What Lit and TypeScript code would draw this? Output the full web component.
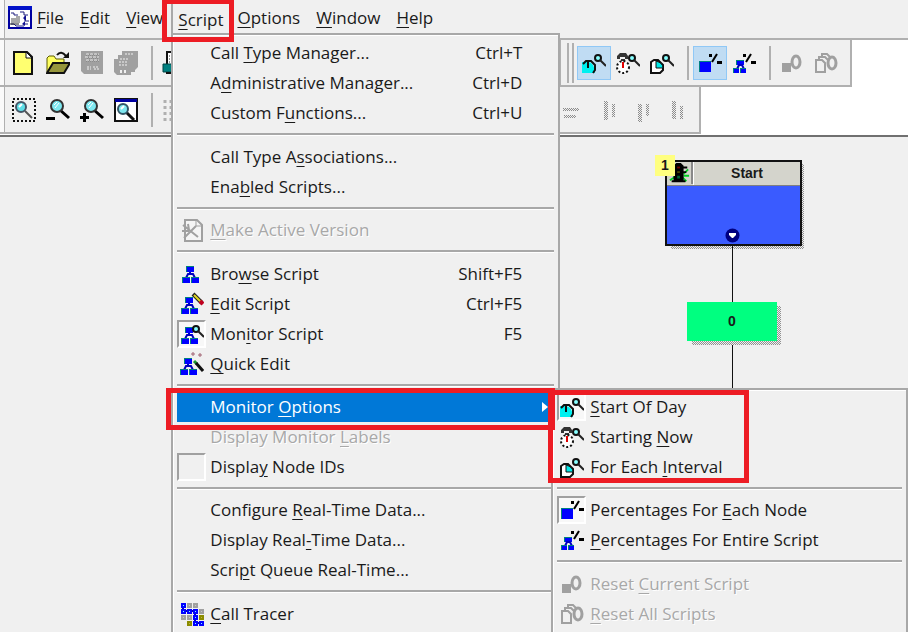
import { LitElement, html, svg, css, nothing, TemplateResult } from "lit";
import { customElement } from "lit/decorators.js";
import { classMap } from "lit/directives/class-map.js";

type Item = {
  label: string;
  keys?: string;
  icon?: string;
  checked?: boolean;
  disabled?: boolean;
  submenu?: boolean;
};
type Entry = Item | "line" | "wide-line";

const SCRIPT_MENU: Entry[] = [
  { label: "Call &Type Manager...", keys: "Ctrl+T" },
  { label: "A&dministrative Manager...", keys: "Ctrl+D" },
  { label: "Custom F&unctions...", keys: "Ctrl+U" },
  "wide-line",
  { label: "Call Type A&ssociations..." },
  { label: "Ena&bled Scripts..." },
  "line",
  { label: "&Make Active Version", icon: "active", disabled: true },
  "wide-line",
  { label: "Bro&wse Script", keys: "Shift+F5", icon: "browse" },
  { label: "&Edit Script", keys: "Ctrl+F5", icon: "edit" },
  { label: "Mon&itor Script", keys: "F5", icon: "monitor", checked: true },
  { label: "&Quick Edit", icon: "quick" },
  "line",
  { label: "Monitor &Options", submenu: true },
  { label: "Display Monitor &Labels", disabled: true },
  { label: "Displa&y Node IDs", checked: true },
  "line",
  { label: "Configure &Real-Time Data..." },
  { label: "Display Real&-Time Data..." },
  { label: "Scri&pt Queue Real-Time..." },
  "wide-line",
  { label: "&Call Tracer", icon: "tracer" },
];

const MONITOR_MENU: Entry[] = [
  { label: "&Start Of Day", icon: "day", checked: true },
  { label: "Starting &Now", icon: "now" },
  { label: "For Each &Interval", icon: "interval" },
  "line",
  { label: "Percentages For &Each Node", icon: "node", checked: true },
  { label: "&Percentages For Entire Script", icon: "entire" },
  "wide-line",
  { label: "Reset &Current Script", icon: "resetOne", disabled: true },
  { label: "&Reset All Scripts", icon: "resetAll", disabled: true },
];

const box = (x: number, y: number, w: number, h: number) => svg`
  <rect x=${x} y=${y} width=${w} height=${h} fill="#008080" />
  <rect x=${x + 1} y=${y + 1} width=${w - 1} height=${h - 1} fill="#0000ff" />`;

const tree = (x: number, y: number) => svg`
  ${box(x + 4, y, 8, 6)}
  <path d="M${x + 8} ${y + 6}v2M${x + 4} ${y + 12}l2-4h5l2 4" stroke="#0000c0" stroke-width="2" fill="none" />
  ${box(x, y + 11, 8, 6)}${box(x + 9, y + 11, 8, 6)}`;

const lens = svg`
  <circle cx="16" cy="7" r="3" fill="#8ff" stroke="#111" stroke-width="2" />
  <path d="M18 9l6 6" stroke="#222" stroke-width="2" />`;

const zoomLens = svg`
  <path d="M14 12l9 8" stroke="#000" stroke-width="3" />
  <circle cx="11" cy="8" r="6" fill="#7fe8f0" stroke="#333" stroke-width="2" />
  <path d="M8 7l3-3M9 10l4-5" stroke="#fff" stroke-width="1" />`;

const percent = svg`
  <path d="M11 3h3v3h-3zM19 10h5v3h-5z" fill="#000" />
  <path d="M14 11l5-8" stroke="#000" stroke-width="2" />`;

/** Stippled bar used by the greyed alignment tools. */
const stipple = (x: number, y: number, w: number, h: number) => {
  const cells: string[] = [];
  for (let r = 0; r < h; r++) {
    for (let c = 0; c < w; c++) {
      if ((r + c) % 2 === 0) cells.push(`M${x + c} ${y + r}h1v1h-1z`);
    }
  }
  return svg`<path d=${cells.join("")} fill="#8c8c8c" />`;
};

const ICONS: Record<string, TemplateResult> = {
  app: svg`
    <rect x="1" y="1" width="22" height="21" fill="#fff" stroke="#0000a0" stroke-width="2" />
    <path d="M0 0h24v4H0z" fill="#0010c8" />
    <path d="M3 7h3v2h4M12 6h4v3h4M17 10v5h4M20 18h-4M3 18h3l2 2h8" stroke="#202080" stroke-width="1" fill="none" />
    <path d="M3 12h9v5H3zM8 10h4v3H8z" fill="#a8a8a8" />
    <path d="M2 18h9" stroke="#222" />
    <path d="M15 12l3-3v6zM14 18l3-3v5z" fill="#101090" />`,
  fresh: svg`
    <path d="M2 1h13l5 5v17H2z" fill="#ffff70" stroke="#111" stroke-width="2" />
    <path d="M14 1v6h6z" fill="#fff" stroke="#111" />`,
  open: svg`
    <path d="M1 21V7l2-2h5l2 3h8v5H8z" fill="#ffff60" stroke="#5c5c00" stroke-width="1" />
    <path d="M1 22l6-10h17l-6 10z" fill="#96963c" stroke="#111" stroke-width="2" />
    <path d="M11 4q4-5 9 1" fill="none" stroke="#111" stroke-width="2" />
    <path d="M23 1v6h-6z" fill="#111" />`,
  save: svg`
    <path d="M1 0h22v23H4l-3-3z" fill="#a0a0a0" />
    ${stipple(6, 2, 13, 9)}
    <path d="M6 3h13M5 6h14M6 9h13" stroke="#f0f0f0" stroke-dasharray="3 1" />
    <path d="M7 16h4M13 16h6M7 18h4M14 18h5" stroke="#f0f0f0" stroke-width="1" stroke-dasharray="2 1" />`,
  saveAll: svg`
    <path d="M8 0h16v16l-3 3v2h-4v3H3l-3-3V8h4V4h4z" fill="#a0a0a0" />
    <path d="M11 3h8M6 8h8M5 11h8M5 14h9" stroke="#f0f0f0" stroke-width="1" stroke-dasharray="2 1" />
    <path d="M6 19h2v3H6zM10 19h2v3h-2z" fill="#f0f0f0" />`,
  print: svg`
    <path d="M5 1h16v14H5z" fill="#fff" stroke="#111" stroke-width="2" />
    <path d="M7 5h11M7 8h11M7 11h11" stroke="#333" stroke-dasharray="1 1" />
    <path d="M1 13h22v8H1z" fill="#008080" stroke="#044" />
    <path d="M4 22h16" stroke="#111" stroke-width="2" />`,
  zoomArea: svg`
    <rect x="1" y="1" width="22" height="22" fill="none" stroke="#111" stroke-width="2" stroke-dasharray="2 2" />
    <path d="M13 13l7 7" stroke="#555" stroke-width="2" />
    <circle cx="9" cy="9" r="5" fill="#5fdfe8" stroke="#456" stroke-width="2" />
    <path d="M7 9l3-3" stroke="#fff" stroke-width="2" />`,
  zoomOut: svg`${zoomLens}<path d="M0 19h9v3H0z" fill="#000" />`,
  zoomIn: svg`${zoomLens}<path d="M0 18h9v3H0zM3 15h3v9H3z" fill="#000" />`,
  zoomFit: svg`
    <rect x="1" y="1" width="22" height="22" fill="#fff" stroke="#111" stroke-width="2" />
    <path d="M1 1h22v3H1z" fill="#0000a0" />
    <path d="M12 14l8 8" stroke="#111" stroke-width="3" />
    <circle cx="9" cy="11" r="5" fill="#7fe8f0" stroke="#356" stroke-width="2" />
    <path d="M7 11l3-3" stroke="#fff" stroke-width="2" />`,
  dots: svg`<path d="M3 2v21M9 2v21M15 2v21" stroke="#b0b0b0" stroke-width="3" stroke-dasharray="3 3" />`,
  alignA: svg`${stipple(0, 10, 16, 3)}${stipple(1, 17, 12, 3)}`,
  alignB: svg`${stipple(7, 3, 4, 19)}${stipple(15, 6, 3, 13)}`,
  alignC: svg`${stipple(7, 6, 4, 18)}${stipple(15, 6, 3, 12)}`,
  alignD: svg`${stipple(7, 3, 4, 18)}${stipple(15, 8, 3, 13)}`,
  active: svg`
    <path d="M5 2h12l5 5v16H5z" fill="#f4f4f4" stroke="#a0a0a0" stroke-width="2" />
    <path d="M16 2v6h6" fill="none" stroke="#a0a0a0" />
    <path d="M3 7l15 12M16 8L4 20M2 13h7M8 6l1 6" stroke="#a0a0a0" stroke-width="2" />`,
  browse: tree(2, 4),
  edit: svg`${tree(1, 5)}
    <path d="M13 2l9 9" stroke="#222" stroke-width="4" />
    <path d="M14 3l7 7" stroke="#e0d820" stroke-width="2" />
    <path d="M20 9l3 3" stroke="#c00020" stroke-width="4" />`,
  monitor: svg`${tree(1, 5)}${lens}`,
  quick: svg`${tree(0, 6)}
    <path d="M14 9l3 3" stroke="#1a9a30" stroke-width="3" />
    <path d="M16 11l7 8" stroke="#111" stroke-width="3" />
    <path d="M13 0v4M11 2h4M20 1v4M18 3h4" stroke="#a06070" />`,
  tracer: svg`
    <path d="M3 3v6h12v12h6" fill="none" stroke="#0000c0" stroke-width="2" />
    <g fill="#c8c8c8" stroke-width="2">
      <path d="M8 2h3v3H8zM14 2h3v3h-3zM20 8h3v3h-3zM2 14h3v3H2zM8 14h3v3H8z" stroke="#a0a0a0" />
      <path d="M20 14h3v3h-3zM8 20h3v3H8z" fill="#b8b840" stroke="#8c8c00" />
      <path d="M2 2h3v3H2zM2 8h3v3H2zM8 8h3v3H8zM14 8h3v3h-3zM14 14h3v3h-3zM14 20h3v3h-3zM20 20h3v3h-3z"
        fill="#7fffff" stroke="#0000ff" />
    </g>`,
  day: svg`
    <path d="M0 22V11h6q6 0 7 11z" fill="#00f0f0" />
    <path d="M1 13l3-3h5l4 4v5l-2 3M6 11v6" fill="none" stroke="#111" stroke-width="2" />
    ${lens}`,
  now: svg`
    <path d="M1 5l3-3h6l2 3v3H9V6H4v2H1zM5 8h4v2H5z" fill="#333" />
    <circle cx="7" cy="16" r="6" fill="#fff" stroke="#111" stroke-width="2" stroke-dasharray="2 2" />
    <path d="M7 11v6" stroke="#e00000" stroke-width="2" />
    ${lens}`,
  interval: svg`
    <path d="M1 11l3-2h4l5 5v5l-3 3H1z" fill="#fff" stroke="#111" stroke-width="2" />
    <path d="M6 10v7h7q0-5-7-7z" fill="#00e8e8" stroke="#111" />
    ${lens}`,
  node: svg`${box(1, 10, 12, 11)}${percent}`,
  entire: svg`
    ${box(4, 9, 8, 5)}
    <path d="M5 18l2-4h3l2 4" stroke="#0000c0" stroke-width="2" fill="none" />
    ${box(1, 17, 6, 5)}${box(8, 17, 6, 5)}${percent}`,
  resetOne: svg`
    <path d="M2 12h9v9H2z" fill="#a0a0a0" />
    <ellipse cx="16" cy="11" rx="4" ry="6" fill="none" stroke="#a0a0a0" stroke-width="3" />`,
  resetAll: svg`
    <path d="M2 9h6l3 3v9H2zM5 9V6h6l3 3M8 6V3h5l3 3" fill="none" stroke="#a0a0a0" stroke-width="2" />
    <ellipse cx="18" cy="12" rx="4" ry="6" fill="#f0f0f0" stroke="#a0a0a0" stroke-width="3" />`,
  light: svg`
    <path d="M1 13l6 2M2 20l6-4M22 8l-5 5M23 15h-6M20 21l-4-4" stroke="#00d020" stroke-width="2" />
    <path d="M6 4l3-3h5l3 3v16H6zM3 6h4v2H3zM17 5h4v2h-4zM17 10h3v2h-3zM4 20h15v2H4z" fill="#000" />
    <path d="M10 5h3v2h-3z" fill="#700" /><path d="M10 10h3v2h-3z" fill="#440" /><path d="M10 15h3v3h-3z" fill="#063" />`,
};

const icon = (name: string) => html`<svg class="icon" viewBox="0 0 24 24" aria-hidden="true">${ICONS[name]}</svg>`;

/** Renders a label whose "&" marks the underlined access key. */
const mnemonic = (label: string) => {
  const at = label.indexOf("&");
  return at < 0
    ? html`${label}`
    : html`${label.slice(0, at)}<u>${label[at + 1]}</u>${label.slice(at + 2)}`;
};

@customElement("app-root")
export class AppRoot extends LitElement {
  static styles = css`
    :host {
      display: flex;
      flex-direction: column;
      height: 100vh;
      overflow: hidden;
      background: #f0f0f0;
      color: #1a1a1a;
      font: 17px/30px "Open Sans", "Noto Sans", sans-serif;
    }
    * { box-sizing: border-box; }
    button {
      font: inherit;
      color: inherit;
      background: none;
      border: 0;
      margin: 0;
      padding: 0;
      white-space: nowrap;
      text-align: left;
    }
    u { text-decoration-thickness: 1px; text-underline-offset: 3px; }
    .icon { width: 24px; height: 24px; flex: none; display: block; }

    .menubar {
      display: flex;
      align-items: center;
      height: 38px;
      padding-left: 8px;
      box-shadow: inset 4px 0 #f8f8f8, inset 5px 0 #b0b0b0;
      flex: none;
    }
    .menubar > .icon { margin: 0 -3px 2px 0; }
    .top { position: relative; padding: 3px 0 5px; }
    .top > button { padding: 0 8px; }
    .top.pressed > button { border-left: 2px solid #a8a8a8; padding: 3px 6px 0 5px; margin-bottom: -3px; }

    .bars {
      flex: none;
      background: #fff;
      border-top: 2px solid #b0b0b0;
      border-bottom: 2px solid #707070;
      padding-bottom: 1px;
    }
    .row { display: flex; height: 47px; }
    .bar {
      display: flex;
      align-items: center;
      background: #f0f0f0;
      border-bottom: 2px solid #b0b0b0;
      border-right: 2px solid #b0b0b0;
      padding: 0 7px 0 6px;
    }
    .bar.main { min-width: 561px; padding-left: 7px; box-shadow: inset 4px 0 #fafafa, inset 5px 0 #b0b0b0; }
    .bar.wide { min-width: 701px; padding-right: 5px; }
    .push { margin-left: auto; }
    .tool { width: 34px; height: 34px; padding: 0 5px; flex: none; }
    .tool.on { background: #c0dcf3; border: 1px solid #90c8f6; padding: 0 4px; }
    .split { width: 2px; height: 34px; background: #b0b0b0; margin: 0 4px 0 8px; }
    .grip { width: 2px; height: 40px; background: #b0b0b0; margin-right: 3px; }

    .canvas { position: relative; flex: 1; }
    .node {
      position: absolute;
      left: 665px;
      top: 23px;
      width: 137px;
      height: 86px;
      border: 2px solid #111;
      background: #3a5bff;
    }
    .hatch {
      position: absolute;
      background: repeating-conic-gradient(#909090 0 25%, #f0f0f0 0 50%) 0 0 / 2px 2px;
    }
    .node-shadow { left: 671px; top: 27px; width: 133px; height: 85px; }
    .count-shadow { left: 692px; top: 169px; width: 89px; height: 39px; }
    .title {
      display: flex;
      height: 24px;
      background: #d4d4cc;
      border-bottom: 1px solid #808080;
      font: bold 14px/22px "Liberation Sans", sans-serif;
    }
    .title span { flex: 1; text-align: center; border-left: 1px solid #fff; }
    .title .icon { width: 26px; height: 22px; border-right: 2px solid #888; }
    .badge {
      position: absolute;
      left: 655px;
      top: 18px;
      width: 20px;
      height: 21px;
      background: #ffff80;
      text-align: center;
      font: bold 14px/20px "Liberation Sans", sans-serif;
    }
    .port { position: absolute; left: 58px; bottom: 1px; width: 15px; height: 15px; }
    .wire { position: absolute; left: 732px; top: 109px; bottom: 0; width: 1px; background: #111; }
    .count {
      position: absolute;
      left: 687px;
      top: 165px;
      width: 90px;
      height: 39px;
      background: #00ff80;
      text-align: center;
      font: bold 14px/39px "Liberation Sans", sans-serif;
    }

    .menu {
      position: absolute;
      z-index: 2;
      display: flex;
      flex-direction: column;
      background: #f0f0f0;
      border: 2px solid #a8a8a8;
      box-shadow: inset 1px 1px #fff;
      padding: 2px 4px 12px;
    }
    .menu.script { left: 0; top: 34px; width: 389px; padding-top: 3px; }
    .menu.monitor { left: 374px; top: -4px; width: 357px; }
    .entry { position: relative; }
    .item { display: flex; align-items: center; width: 100%; height: 30px; padding-right: 32px; }
    .item .slot {
      display: grid;
      place-items: center;
      width: 29px;
      height: 28px;
      margin-right: 4px;
      flex: none;
    }
    .item.checked .slot {
      background: #f8f8f8;
      border: 2px solid #fff;
      border-top-color: #a0a0a0;
      border-left-color: #a0a0a0;
    }
    .item.checked.blank .slot { background: #f0f0f0; }
    .item.disabled { color: #a8a8a8; text-shadow: 1px 1px #fff; }
    .item.selected { background: #0078d7; color: #fff; padding-right: 6px; }
    .keys { margin-left: auto; }
    .arrow { margin-left: auto; border: 5px solid transparent; border-left: 6px solid #fff; border-right: 0; }
    hr {
      width: 100%;
      height: 3px;
      border: 0;
      border-top: 2px solid #a8a8a8;
      background: #fff;
      margin: 5px 0;
    }
    hr.wide-line { margin-bottom: 6px; }

    .mark { position: absolute; z-index: 3; border: 5px solid #ed1c24; pointer-events: none; }
    .mark.on-script { left: -9px; right: -5px; top: 0; height: 43px; }
    .mark.on-options { left: -11px; top: -4px; width: 389px; height: 42px; }
    .mark.on-modes { left: -5px; top: 0; width: 201px; height: 93px; }
  `;

  private top(label: string) {
    return html`<div class="top"><button type="button">${mnemonic(label)}</button></div>`;
  }

  private tool(name: string, label: string, on = false) {
    return html`<button type="button" class=${classMap({ tool: true, on })} aria-label=${label}>${icon(name)}</button>`;
  }

  private entries(list: Entry[]): unknown {
    return list.map((entry) => {
      if (typeof entry === "string") return html`<hr class=${entry} />`;
      const classes = {
        item: true,
        checked: !!entry.checked,
        blank: !entry.icon,
        disabled: !!entry.disabled,
        selected: !!entry.submenu,
      };
      return html`<div class="entry">
        <button type="button" role="menuitem" class=${classMap(classes)} ?disabled=${entry.disabled}>
          <span class="slot">${entry.icon ? icon(entry.icon) : nothing}</span>
          <span>${mnemonic(entry.label)}</span>
          ${entry.keys ? html`<span class="keys">${entry.keys}</span>` : nothing}
          ${entry.submenu ? html`<span class="arrow"></span>` : nothing}
        </button>
        ${entry.submenu
          ? html`<div class="mark on-options"></div>
              <div class="menu monitor" role="menu">
                ${this.entries(MONITOR_MENU)}
                <div class="mark on-modes"></div>
              </div>`
          : nothing}
      </div>`;
    });
  }

  render() {
    return html`
      <nav class="menubar">
        ${icon("app")}
        ${this.top("&File")}${this.top("&Edit")}${this.top("&View")}
        <div class="top pressed">
          <button type="button">${mnemonic("&Script")}</button>
          <div class="menu script" role="menu">${this.entries(SCRIPT_MENU)}</div>
          <div class="mark on-script"></div>
        </div>
        ${this.top("&Options")}${this.top("&Window")}${this.top("&Help")}
      </nav>
      <section class="bars">
        <div class="row">
          <div class="bar main">
            ${this.tool("fresh", "New")}${this.tool("open", "Open")}
            ${this.tool("save", "Save")}${this.tool("saveAll", "Save all")}
            <span class="split"></span>
            ${this.tool("print", "Print")}
          </div>
          <div class="bar">
            <span class="grip"></span><span class="grip"></span>
            ${this.tool("day", "Start of day", true)}${this.tool("now", "Starting now")}
            ${this.tool("interval", "For each interval")}
            <span class="split"></span>
            ${this.tool("node", "Percentages for each node", true)}
            ${this.tool("entire", "Percentages for entire script")}
            <span class="split"></span>
            ${this.tool("resetOne", "Reset current script")}${this.tool("resetAll", "Reset all scripts")}
          </div>
        </div>
        <div class="row">
          <div class="bar main wide">
            ${this.tool("zoomArea", "Zoom area")}${this.tool("zoomOut", "Zoom out")}
            ${this.tool("zoomIn", "Zoom in")}${this.tool("zoomFit", "Zoom to fit")}
            <span class="split"></span>
            ${this.tool("dots", "Grid")}
            <span class="push"></span>
            ${this.tool("alignA", "Align middle")}${this.tool("alignB", "Align top")}
            ${this.tool("alignC", "Align bottom")}${this.tool("alignD", "Align height")}
          </div>
        </div>
      </section>
      <main class="canvas">
        <div class="hatch node-shadow"></div>
        <div class="wire"></div>
        <div class="node">
          <div class="title">${icon("light")}<span>Start</span></div>
          <svg class="port" viewBox="0 0 15 15" aria-hidden="true">
            <circle cx="7.5" cy="7.5" r="7" fill="#000080" />
            <path d="M4 5h7v2l-3 3h-1l-3-3z" fill="#fff" />
          </svg>
        </div>
        <div class="badge">1</div>
        <div class="hatch count-shadow"></div>
        <div class="count">0</div>
      </main>
    `;
  }
}
